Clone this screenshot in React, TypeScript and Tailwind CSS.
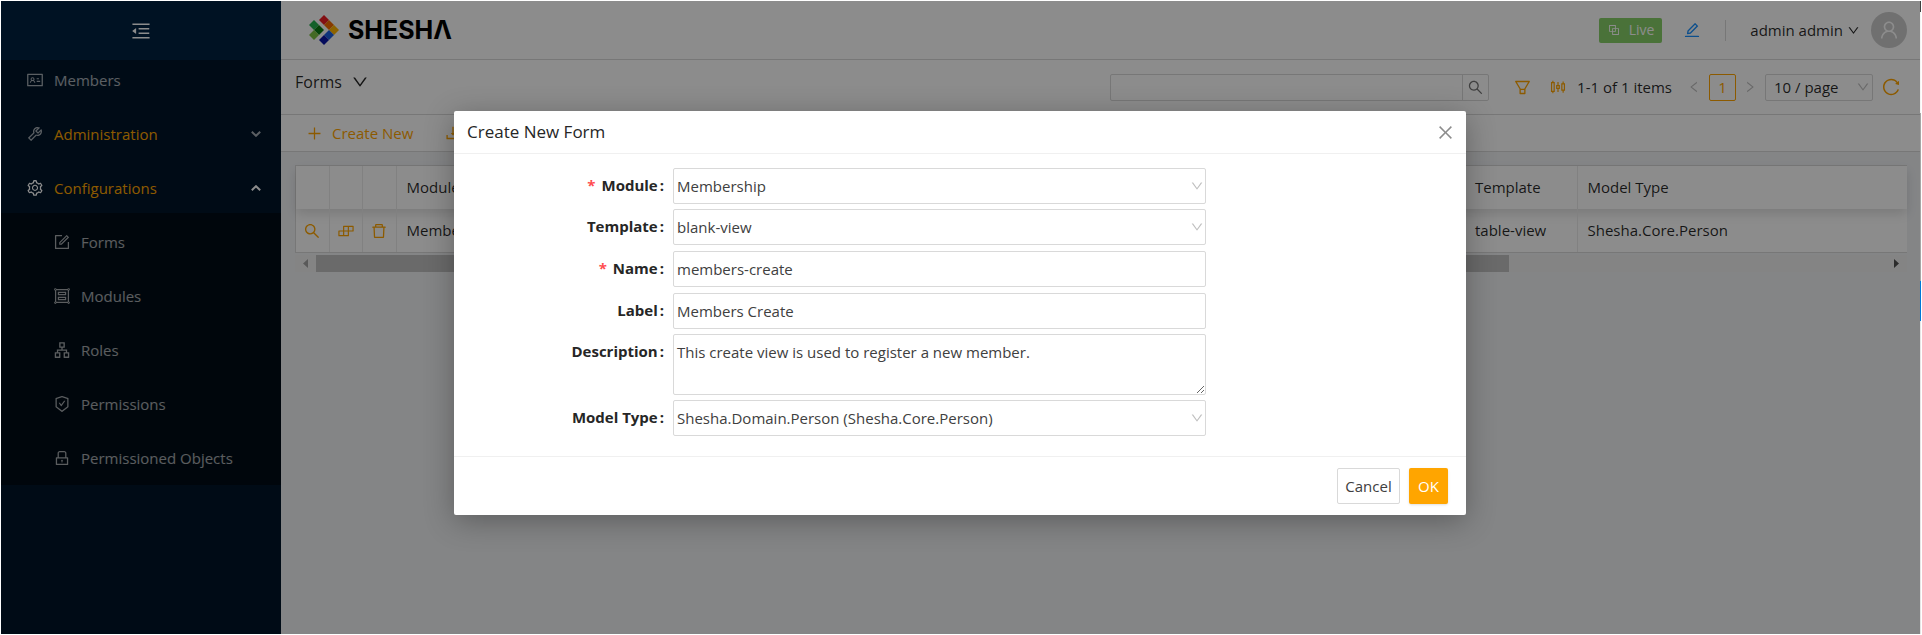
import React from "react";
import {
  AiOutlineMenuFold, AiOutlineIdcard, AiOutlineTool, AiOutlineSetting, AiOutlineForm, AiOutlineGroup,
  AiOutlineApartment, AiOutlineSafetyCertificate, AiOutlineLock, AiOutlineSearch, AiOutlineDelete,
  AiOutlineEdit, AiOutlineBlock, AiOutlineDown, AiOutlineUser, AiOutlineFilter, AiOutlineSliders,
  AiOutlineReload, AiOutlineClose, AiOutlinePlus, AiOutlineDownload, AiOutlineBuild, AiOutlineLeft,
  AiOutlineRight,
} from "react-icons/ai";
import type { IconType } from "react-icons";

const subItems: { label: string; icon: IconType }[] = [
  { label: "Forms", icon: AiOutlineForm },
  { label: "Modules", icon: AiOutlineGroup },
  { label: "Roles", icon: AiOutlineApartment },
  { label: "Permissions", icon: AiOutlineSafetyCertificate },
  { label: "Permissioned Objects", icon: AiOutlineLock },
];

function MenuArrow({ up }: { up?: boolean }) {
  return (
    <svg viewBox="0 0 10 6" className="ml-auto h-[6px] w-[10px]" fill="none" stroke="currentColor" strokeWidth="2">
      <path d={up ? "M0.8 5.2 5 1.2 9.2 5.2" : "M0.8 0.8 5 4.8 9.2 0.8"} />
    </svg>
  );
}

function Sidebar() {
  return (
    <aside className="flex w-[280px] shrink-0 flex-col bg-[#001529]">
      <button aria-label="Collapse menu" className="flex h-[59px] shrink-0 items-center justify-center bg-[#002140] text-white">
        <AiOutlineMenuFold size={22} />
      </button>
      <nav className="text-[15px] text-white/65">
        <a href="#members" className="flex h-10 items-center gap-[10px] pr-5 pl-[25px]">
          <AiOutlineIdcard size={18} />
          Members
        </a>
        <a href="#administration" className="mt-[14px] flex h-10 items-center gap-[10px] pr-5 pl-[25px]">
          <AiOutlineTool size={18} />
          <span className="text-[#ffa500]">Administration</span>
          <MenuArrow />
        </a>
        <a href="#configurations" className="mt-[14px] flex h-10 items-center gap-[10px] pr-5 pl-[25px] text-white">
          <AiOutlineSetting size={18} />
          <span className="text-[#ffa500]">Configurations</span>
          <MenuArrow up />
        </a>
        <div className="mt-[5px] flex flex-col gap-[14px] bg-[#000c17] pt-[9px] pb-[7px]">
          {subItems.map(({ label, icon: Icon }) => (
            <a key={label} href={"#" + label} className="flex h-10 items-center gap-[10px] pl-[52px]">
              <Icon size={18} />
              {label}
            </a>
          ))}
        </div>
      </nav>
    </aside>
  );
}

function Logo() {
  return (
    <div className="flex items-center gap-[9px]">
      <svg viewBox="0 0 30 30" className="size-[30px]" aria-hidden="true">
        <path d="M10 5 15 0 20 5 15 10Z" fill="#ee1c24" />
        <path d="M15 10 20 5 25 10 20 15Z" fill="#f56a00" />
        <path d="M20 15 25 10 30 15 25 20Z" fill="#ffb400" />
        <path d="M15 20 20 15 25 20 20 25Z" fill="#1a5fe0" />
        <path d="M10 25 15 20 20 25 15 30Z" fill="#0a16a8" />
        <path d="M0 10 5 5 10 10 5 15Z" fill="#23b14d" />
        <path d="M5 15 10 10 15 15 10 20Z" fill="#0a7d12" />
        <path d="M0 20 5 15 10 20 5 25Z" fill="#7cc243" />
      </svg>
      <span className="font-['Inter',sans-serif] text-[25px] leading-[30px] font-bold text-black">SHESHΛ</span>
    </div>
  );
}

function Header() {
  return (
    <header className="flex h-[59px] shrink-0 items-center border-b border-[#d9d9d9] bg-white pr-[13px] pl-7 text-[15px]">
      <Logo />
      <div className="ml-auto flex items-center">
        <span className="flex h-[25px] items-center gap-2 rounded-[2px] bg-[#87d068] px-2 text-sm text-white">
          <AiOutlineBlock size={14} />
          Live
        </span>
        <button aria-label="Edit" className="ml-[21px] text-[#1890ff]"><AiOutlineEdit size={18} /></button>
        <span className="ml-6 h-[21px] w-px bg-[#d9d9d9]" />
        <button className="ml-6 flex items-center gap-1">admin admin <AiOutlineDown size={13} /></button>
        <span className="ml-[11px] flex size-9 items-center justify-center rounded-full bg-[#cccccc] text-white"><AiOutlineUser size={22} /></span>
      </div>
    </header>
  );
}

function Toolbar() {
  return (
    <div className="flex h-[55px] shrink-0 items-center border-b border-[#d9d9d9] bg-white pr-[19px] pl-[14px]">
      <button className="flex items-center gap-[9px] pb-[10px] text-base">Forms <AiOutlineDown size={18} /></button>
      <div className="ml-auto flex h-[27px] w-[379px] rounded-[2px] border border-[#d9d9d9]">
        <input aria-label="Search forms" className="min-w-0 flex-1 outline-none" />
        <button aria-label="Search" className="flex w-[26px] items-center justify-center border-l border-[#d9d9d9] text-[#737373]"><AiOutlineSearch size={17} /></button>
      </div>
      <button aria-label="Filter" className="ml-6 text-[#ffa500]"><AiOutlineFilter size={19} /></button>
      <button aria-label="Columns" className="ml-[17px] text-[#ffa500]"><AiOutlineSliders size={18} /></button>
      <span className="ml-[10px] text-[15px]">1-1 of 1 items</span>
      <button aria-label="Previous page" className="ml-[15px] text-[#bfbfbf]"><AiOutlineLeft size={14} /></button>
      <button className="ml-2 size-[27px] rounded-[2px] border border-[#ffa500] text-[15px] text-[#ffa500]">1</button>
      <button aria-label="Next page" className="ml-[7px] text-[#bfbfbf]"><AiOutlineRight size={14} /></button>
      <div className="relative ml-2">
        <select aria-label="Page size" className="block h-[27px] w-[108px] appearance-none rounded-[2px] border border-[#d9d9d9] pl-2 text-[15px]">
          <option>10 / page</option>
        </select>
        <AiOutlineDown size={14} className="pointer-events-none absolute top-[6px] right-[3px] text-[#bfbfbf]" />
      </div>
      <button aria-label="Reload" className="ml-2 text-[#ffa500]"><AiOutlineReload size={20} /></button>
    </div>
  );
}

function Actions() {
  return (
    <div className="flex h-[37px] shrink-0 items-center gap-[31px] border-b border-[#d9d9d9] bg-white pl-[25px] text-[15px] text-[#ffa500]">
      <button className="flex items-center gap-[9px]"><AiOutlinePlus size={17} /> Create New</button>
      <button aria-label="Import"><AiOutlineDownload size={18} /></button>
    </div>
  );
}

const cell = "border-r border-[#ebebeb] px-[10px] text-left font-normal";
const lastCell = "px-[10px] text-left font-normal";
const action = "border-r border-[#ebebeb] text-center";
const actionButton = "block w-full text-[#ffa500]";

function FormsTable() {
  return (
    <div className="px-[13px] pt-[13px] pl-[14px] text-[15px]">
      <div className="border-y border-l border-[#d9d9d9] bg-white">
        <table className="w-full table-fixed border-collapse">
          <colgroup>
            <col className="w-[33px]" />
            <col className="w-[33px]" />
            <col className="w-[34px]" />
            <col className="w-[254px]" />
            <col />
            <col className="w-[112px]" />
            <col className="w-[330px]" />
          </colgroup>
          <thead>
            <tr className="h-[43px] shadow-[0_5px_10px_rgba(0,0,0,0.12)]">
              <th className={action} aria-label="View" />
              <th className={action} aria-label="Configure" />
              <th className={action} aria-label="Delete" />
              <th className={cell}>Module</th>
              <th />
              <th className={cell}>Template</th>
              <th className={lastCell}>Model Type</th>
            </tr>
          </thead>
          <tbody>
            <tr className="h-[43px]">
              <td className={action}><button aria-label="View" className={actionButton}><AiOutlineSearch size={18} className="mx-auto" /></button></td>
              <td className={action}><button aria-label="Configure" className={actionButton}><AiOutlineBuild size={18} className="mx-auto" /></button></td>
              <td className={action}><button aria-label="Delete" className={actionButton}><AiOutlineDelete size={18} className="mx-auto" /></button></td>
              <td className={cell}>Membership</td>
              <td />
              <td className={cell}>table-view</td>
              <td className={lastCell}>Shesha.Core.Person</td>
            </tr>
          </tbody>
        </table>
      </div>
      <div className="mt-[2px] flex h-[17px] items-center bg-[#f1f1f1]">
        <svg viewBox="0 0 21 17" className="h-[17px] w-[21px] shrink-0" fill="#a3a3a3"><path d="M8 8.500 13 4V13Z" /></svg>
        <div className="h-full w-[74%] bg-[#c1c1c1]" />
        <svg viewBox="0 0 21 17" className="ml-auto h-[17px] w-[21px] shrink-0" fill="#505050"><path d="M13 8.500 8 4V13Z" /></svg>
      </div>
    </div>
  );
}

function Field({ id, label, required, children }: { id: string; label: string; required?: boolean; children: React.ReactNode }) {
  return (
    <div className="flex">
      <label htmlFor={id} className="mt-[5px] w-[219px] shrink-0 pr-[9px] text-right text-[15px] leading-6 font-bold">
        {required && <span className="mr-[6px] text-[#ff4d4f]">*</span>}
        {label}
        <span className="ml-[2px]">:</span>
      </label>
      <div className="relative w-[533px]">{children}</div>
    </div>
  );
}

const control = "block h-9 w-full appearance-none rounded-[2px] border border-[#d9d9d9] bg-white px-[3px] text-[15px] text-[#404040] outline-none";

function SelectField({ id, label, value, required }: { id: string; label: string; value: string; required?: boolean }) {
  return (
    <Field id={id} label={label} required={required}>
      <select id={id} className={control}><option>{value}</option></select>
      <AiOutlineDown size={14} className="pointer-events-none absolute top-[11px] right-[2px] text-[#bfbfbf]" />
    </Field>
  );
}

function CreateDialog() {
  return (
    <div role="dialog" aria-modal="true" aria-labelledby="dialog-title" className="w-[1012px] max-w-full rounded-[2px] bg-white text-[#262626] shadow-[0_6px_30px_rgba(0,0,0,0.3)]">
      <div className="flex h-[43px] items-center justify-between border-b border-[#f0f0f0] pr-[11px] pl-[13px]">
        <h2 id="dialog-title" className="text-[17px]">Create New Form</h2>
        <button aria-label="Close" className="text-[#8c8c8c]"><AiOutlineClose size={19} /></button>
      </div>
      <form className="flex flex-col gap-[5px] pt-[14px] pb-5">
        <SelectField id="module" label="Module" value="Membership" required />
        <SelectField id="template" label="Template" value="blank-view" />
        <div className="flex flex-col gap-[6px] pt-px">
          <Field id="name" label="Name" required><input id="name" className={control} defaultValue="members-create" /></Field>
          <Field id="label" label="Label"><input id="label" className={control} defaultValue="Members Create" /></Field>
        </div>
        <Field id="description" label="Description">
          <textarea id="description" className="block h-[61px] w-full rounded-[2px] border border-[#d9d9d9] px-[3px] pt-[5px] text-[15px] leading-6 text-[#404040] outline-none" defaultValue="This create view is used to register a new member." />
        </Field>
        <SelectField id="model-type" label="Model Type" value="Shesha.Domain.Person (Shesha.Core.Person)" />
      </form>
      <div className="flex h-[59px] items-center justify-end gap-[9px] border-t border-[#f0f0f0] pr-[18px] text-[15px]">
        <button className="h-9 w-[63px] rounded-[2px] border border-[#d9d9d9] text-[#404040]">Cancel</button>
        <button className="h-9 w-[39px] rounded-[2px] bg-[#ffa500] text-white shadow-sm">OK</button>
      </div>
    </div>
  );
}

function EdgeStrip() {
  return (
    <div className="flex w-px shrink-0 flex-col">
      <div className="h-[11px] bg-[#404040]" />
      <div className="h-[101px] bg-[#f5f5f5]" />
      <div className="h-[168px] bg-[#a6a6a6]" />
      <div className="h-10 bg-[#0078d7]" />
      <div className="flex-1 bg-[#e6e6e6]" />
    </div>
  );
}

export default function App() {
  return (
    <div className="flex h-screen bg-white p-px font-['Open_Sans','Noto_Sans',sans-serif] text-black/85">
      <div className="relative flex min-w-0 flex-1 overflow-hidden">
        <Sidebar />
        <main className="flex min-w-0 flex-1 flex-col bg-[#f0f2f5]">
          <Header />
          <Toolbar />
          <Actions />
          <FormsTable />
        </main>
        <div className="absolute inset-0 flex items-start justify-center bg-black/45 pt-[110px] pr-px">
          <CreateDialog />
        </div>
      </div>
      <EdgeStrip />
    </div>
  );
}
